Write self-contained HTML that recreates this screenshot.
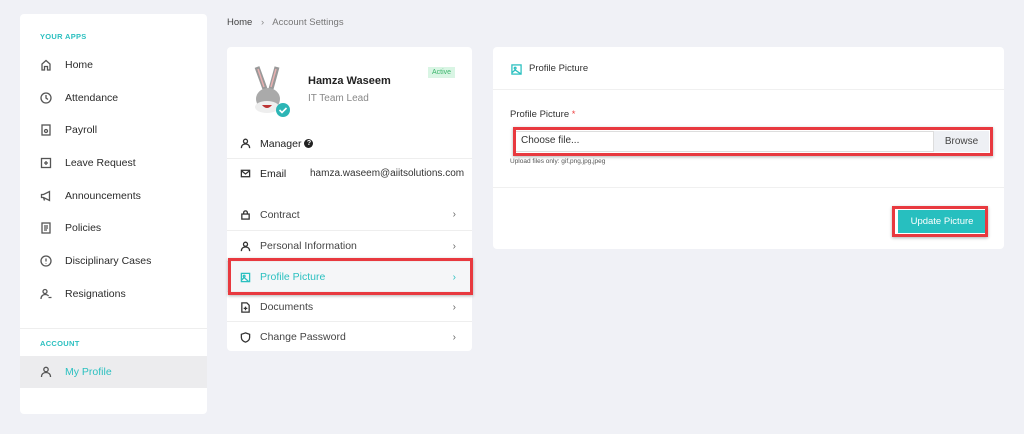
<!DOCTYPE html>
<html><head><meta charset="utf-8"><style>
*{box-sizing:border-box;margin:0;padding:0}
body{width:1024px;height:434px;background:#f0f1f6;font-family:"Liberation Sans",sans-serif;position:relative;overflow:hidden;color:#333}
.a{position:absolute}
.card{position:absolute;background:#fff;border-radius:4px}
.nav{position:absolute;left:40px;font-size:10.5px;color:#2a2a2a;display:flex;align-items:center}
.nav svg{width:12px;height:12px;margin-right:13px;stroke:#555;fill:none;stroke-width:1.3}
.lbl{font-size:7.5px;font-weight:bold;color:#2cc0c0;letter-spacing:.3px}
.row{position:absolute;left:0;width:245px;height:31px;display:flex;align-items:center;padding-left:13px;font-size:10.5px;color:#444;border-top:1px solid #eee}
.row svg{width:11px;height:11px;margin-right:9px;stroke:#333;fill:none;stroke-width:1.4}
.row .ch{position:absolute;right:16px;color:#666;font-size:10px}
</style></head><body>
<div class="card" style="left:20px;top:14px;width:187px;height:400px"></div>
<div class="a lbl" style="left:40px;top:32px">YOUR APPS</div>
<div class="nav" style="top:59px"><svg viewBox="0 0 12 12"><path d="M2 11V5l4-3.5L10 5v6H7.5V7.5h-3V11z"/></svg>Home</div>
<div class="nav" style="top:92px"><svg viewBox="0 0 12 12"><circle cx="6" cy="6" r="5"/><path d="M6 3v3l2 1.5"/></svg>Attendance</div>
<div class="nav" style="top:124px"><svg viewBox="0 0 12 12"><rect x="2" y="1" width="8" height="10"/><circle cx="6" cy="7" r="1.5"/></svg>Payroll</div>
<div class="nav" style="top:157px"><svg viewBox="0 0 12 12"><rect x="1.5" y="1.5" width="9" height="9"/><path d="M6 4v4M4 6h4"/></svg>Leave Request</div>
<div class="nav" style="top:190px"><svg viewBox="0 0 12 12"><path d="M1.5 4.5h2l6-3v9l-6-3h-2zM3.5 7.5l1 3"/></svg>Announcements</div>
<div class="nav" style="top:222px"><svg viewBox="0 0 12 12"><rect x="2" y="1" width="8" height="10"/><path d="M4 4h4M4 6h4M4 8h3"/></svg>Policies</div>
<div class="nav" style="top:255px"><svg viewBox="0 0 12 12"><circle cx="6" cy="6" r="5"/><path d="M6 3.5v3M6 8v.5"/></svg>Disciplinary Cases</div>
<div class="nav" style="top:288px"><svg viewBox="0 0 12 12"><circle cx="5" cy="3.5" r="2"/><path d="M1 11c0-3 2-4.5 4-4.5s3 .7 3.5 1.5M8.5 9.5h3"/></svg>Resignations</div>
<div class="a" style="left:20px;top:328px;width:187px;height:1px;background:#eee"></div>
<div class="a lbl" style="left:40px;top:339px">ACCOUNT</div>
<div class="a" style="left:20px;top:356px;width:187px;height:32px;background:#ececee"></div>
<div class="nav" style="top:366px;color:#2cc0c0"><svg viewBox="0 0 12 12"><circle cx="6" cy="3.5" r="2.2"/><path d="M1.5 11c0-3 2-4.5 4.5-4.5s4.5 1.5 4.5 4.5"/></svg>My Profile</div>

<div class="a" style="left:227px;top:17px;font-size:9.5px;color:#444">Home <span style="color:#888;margin:0 6px">›</span> <span style="color:#777">Account Settings</span></div>

<div class="card" style="left:227px;top:47px;width:245px;height:304px">
 <div class="a" style="left:22px;top:18px;width:44px;height:54px">
  <svg width="44" height="54" viewBox="0 0 44 54"><path d="M8 2l8 22M28 2l-6 22" stroke="#999" stroke-width="5" fill="none"/><path d="M9 4l6 18M27 4l-5 18" stroke="#e8b0b0" stroke-width="1.5"/><ellipse cx="19" cy="34" rx="12" ry="11" fill="#aaa"/><ellipse cx="18" cy="42" rx="12" ry="6" fill="#eee"/><path d="M13 40q5 6 10 0z" fill="#b33"/><circle cx="34" cy="45" r="7" fill="#2cb5b5"/><path d="M30.5 45l2.5 2.5 4.5-4.5" stroke="#fff" stroke-width="1.6" fill="none"/></svg>
 </div>
 <div class="a" style="left:81px;top:28px;font-size:11px;font-weight:bold;color:#222">Hamza Waseem</div>
 <div class="a" style="left:81px;top:46px;font-size:10px;color:#888">IT Team Lead</div>
 <div class="a" style="left:201px;top:20px;background:#d9f5e4;color:#3bb56b;font-size:7px;padding:2px 4px">Active</div>
 <div class="row" style="top:81px;border:none"><svg viewBox="0 0 12 12"><circle cx="6" cy="3.5" r="2.2"/><path d="M1.5 11c0-3 2-4.5 4.5-4.5s4.5 1.5 4.5 4.5"/></svg><span style="color:#222">Manager</span><span style="display:inline-block;width:9px;height:9px;border-radius:50%;background:#222;color:#fff;font-size:7px;text-align:center;line-height:9px;margin-left:3px;font-weight:bold">?</span></div>
 <div class="row" style="top:111px;height:30px"><svg viewBox="0 0 12 12"><rect x="1.5" y="2.5" width="9" height="7"/><path d="M1.5 3l4.5 3.5L10.5 3"/></svg><span style="color:#222;width:50px">Email</span><span style="color:#333;font-size:10px">hamza.waseem@aiitsolutions.com</span></div>
 <div class="row" style="top:152px;border:none"><svg viewBox="0 0 12 12"><rect x="2" y="5.5" width="8" height="5.5"/><path d="M4 5.5V4a2 2 0 014 0v1.5"/></svg>Contract<span class="ch">›</span></div>
 <div class="row" style="top:183px"><svg viewBox="0 0 12 12"><circle cx="6" cy="3.5" r="2.2"/><path d="M1.5 11c0-3 2-4.5 4.5-4.5s4.5 1.5 4.5 4.5"/></svg>Personal Information<span class="ch">›</span></div>
 <div class="row" style="top:214px;background:#f5f6f8;color:#2cc0c0"><svg viewBox="0 0 12 12" style="stroke:#2cc0c0"><rect x="1.5" y="1.5" width="9" height="9"/><circle cx="4.5" cy="4.5" r="1"/><path d="M1.5 9l3-3 5 4.5"/></svg>Profile Picture<span class="ch" style="color:#2cc0c0">›</span></div>
 <div class="row" style="top:244px"><svg viewBox="0 0 12 12"><path d="M2 1h5.5L10 3.5V11H2z"/><path d="M6 5v4M4 7h4"/></svg>Documents<span class="ch">›</span></div>
 <div class="row" style="top:274px"><svg viewBox="0 0 12 12"><path d="M6 1l4.5 1.5V6c0 2.5-2 4.5-4.5 5C3.5 10.5 1.5 8.5 1.5 6V2.5z"/></svg>Change Password<span class="ch">›</span></div>
</div>
<div class="a" style="left:228px;top:258px;width:245px;height:37px;border:3px solid #e8393f;box-shadow:0 1px 3px rgba(0,0,0,.3)"></div>

<div class="card" style="left:493px;top:47px;width:511px;height:202px">
 <svg class="a" style="left:18px;top:17px" width="11" height="11" viewBox="0 0 12 12" fill="none" stroke="#2cc0c0" stroke-width="1.4"><rect x="1" y="1" width="10" height="10"/><circle cx="4.5" cy="4.5" r="1"/><path d="M1 9.5l3.5-3 6.5 4.5"/></svg>
 <div class="a" style="left:36px;top:16px;font-size:9.5px;color:#333">Profile Picture</div>
 <div class="a" style="left:0;top:42px;width:511px;height:1px;background:#f0f0f0"></div>
 <div class="a" style="left:17px;top:62px;font-size:9.5px;color:#333">Profile Picture <span style="color:#e44">*</span></div>
 <div class="a" style="left:22px;top:84px;width:474px;height:21px;border:1px solid #ddd"></div>
 <div class="a" style="left:28px;top:88px;font-size:10px;color:#333">Choose file...</div>
 <div class="a" style="left:440px;top:84px;width:56px;height:21px;background:#eef0f4;border-left:1px solid #ddd;font-size:10px;color:#444;text-align:center;line-height:21px">Browse</div>
 <div class="a" style="left:17px;top:111px;font-size:6.5px;color:#555">Upload files only: gif,png,jpg,jpeg</div>
 <div class="a" style="left:0;top:140px;width:511px;height:1px;background:#f0f0f0"></div>
 <div class="a" style="left:405px;top:163px;width:88px;height:23px;background:#27bfbf;color:#fff;font-size:9.5px;text-align:center;line-height:23px">Update Picture</div>
</div>
<div class="a" style="left:513px;top:127px;width:480px;height:29px;border:3px solid #e8393f;box-shadow:0 1px 3px rgba(0,0,0,.3)"></div>
<div class="a" style="left:892px;top:206px;width:96px;height:31px;border:3px solid #e8393f;box-shadow:0 1px 3px rgba(0,0,0,.3)"></div>
</body></html>
